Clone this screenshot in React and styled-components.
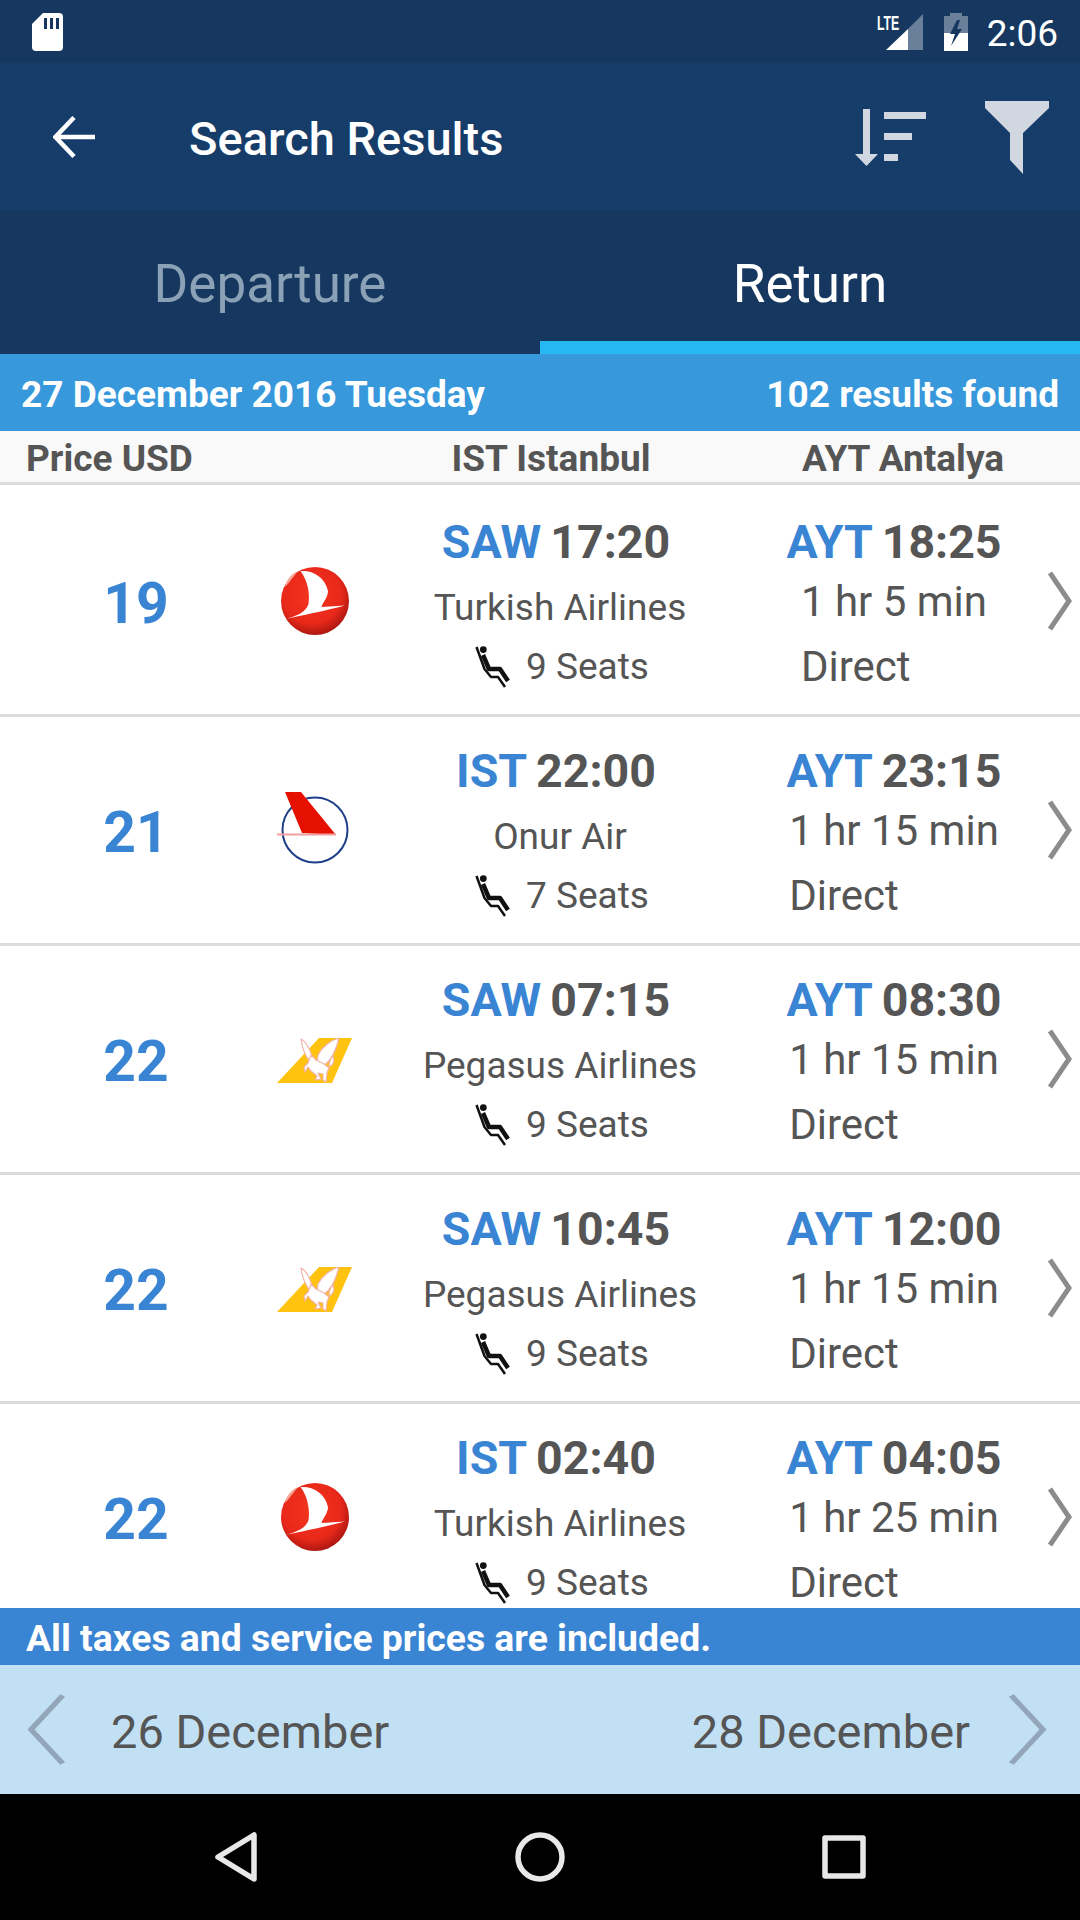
import styled, { createGlobalStyle } from 'styled-components';

const GlobalStyle = createGlobalStyle`
  html, body {
    margin: 0;
    padding: 0;
    background: #fff;
    font-family: Roboto, "Liberation Sans", sans-serif;
  }
  * { box-sizing: border-box; }
`;

const Screen = styled.div`
  width: 1080px;
  height: 1920px;
  display: flex;
  flex-direction: column;
  overflow: hidden;
`;

const StatusBar = styled.div`
  height: 63px;
  flex: none;
  background: #163860;
  display: flex;
  align-items: center;
  justify-content: space-between;
  padding: 0 22px 0 32px;
`;

const StatusRight = styled.div`
  display: flex;
  align-items: center;
`;

const Clock = styled.span`
  color: #fff;
  font-size: 37px;
  margin-left: 19px;
  padding-top: 3px;
`;

const Lte = styled.span`
  position: absolute;
  left: -9px;
  top: 2px;
  color: #fff;
  font-size: 19.5px;
  line-height: 14px;
  font-weight: 700;
  font-family: "Liberation Sans", sans-serif;
  transform: scaleX(0.63);
  transform-origin: left;
`;

const SignalWrap = styled.div`
  position: relative;
  width: 37px;
  height: 36px;
  margin-right: 21px;
  svg { display: block; }
`;

const AppBar = styled.div`
  height: 147px;
  flex: none;
  background: #163d6a;
  display: flex;
  align-items: center;
  padding: 0 31px 0 53px;
`;

const Title = styled.div`
  flex: 1;
  margin-left: 94px;
  padding-top: 4px;
  color: #fff;
  font-size: 47px;
  font-weight: 500;
`;

const ActionIcons = styled.div`
  display: flex;
  align-items: center;
  gap: 59px;
  padding-top: 2px;
`;

const Tabs = styled.div`
  height: 144px;
  flex: none;
  background: #16375f;
  display: flex;
`;

const Tab = styled.div`
  width: 540px;
  display: flex;
  align-items: center;
  justify-content: center;
  padding-top: 17px;
  font-size: 53px;
  color: ${(p) => (p.$active ? '#fff' : '#8ba1b5')};
  border-bottom: 13px solid ${(p) => (p.$active ? '#26b8f2' : 'transparent')};
`;

const DateBar = styled.div`
  height: 77px;
  flex: none;
  background: #3798dc;
  color: #fff;
  font-size: 37px;
  font-weight: 700;
  display: flex;
  align-items: center;
  justify-content: space-between;
  padding: 4px 21px 0;
`;

const ColumnHeader = styled.div`
  height: 54px;
  flex: none;
  background: #f9f9f9;
  border-bottom: 3px solid #dcdcdc;
  color: #555;
  font-size: 37px;
  font-weight: 700;
  display: grid;
  grid-template-columns: 358px 386px 318px;
  align-items: center;
  padding-top: 4px;
`;

const HeaderCell = styled.span`
  text-align: ${(p) => (p.$left ? 'left' : 'center')};
  padding-left: ${(p) => (p.$left ? '26px' : '0')};
`;

const List = styled.div`
  flex: 1;
  min-height: 0;
  overflow: hidden;
  padding-top: 3px;
`;

const Row = styled.div`
  height: 229px;
  border-bottom: 3px solid #dcdcdc;
  display: grid;
  grid-template-columns: 272px 86px 404px 264px 54px;
  align-items: start;
`;

const Price = styled.div`
  height: 226px;
  display: flex;
  align-items: center;
  justify-content: center;
  padding-top: 5px;
  color: #3a84d4;
  font-size: 57px;
  font-weight: 700;
`;

const LogoCell = styled.div`
  height: 226px;
  display: flex;
  align-items: center;
  justify-content: center;
  svg { display: block; flex: none; }
`;

const Middle = styled.div`
  display: flex;
  flex-direction: column;
  align-items: center;
  padding-top: 24px;
`;

const TimeLine = styled.div`
  height: 60px;
  display: flex;
  align-items: center;
  font-size: 46.5px;
  font-weight: 700;
  color: #555;
  transform: translateX(${(p) => p.$shift || 0}px);
`;

const Code = styled.span`
  color: #3a84d4;
  font-weight: 700;
  margin-right: 9px;
`;

const Airline = styled.div`
  height: 70px;
  display: flex;
  align-items: center;
  font-size: 37px;
  color: #555;
`;

const Seats = styled.div`
  height: 48px;
  display: flex;
  align-items: center;
  font-size: 37px;
  color: #555;
  transform: translateX(2px);
  svg { display: block; margin-right: 16px; }
`;

const Arrival = styled.div`
  display: flex;
  flex-direction: column;
  align-items: center;
  padding-top: 24px;
`;

const ArrivalInfo = styled.div`
  display: flex;
  flex-direction: column;
  align-items: flex-start;
`;

const Duration = styled.div`
  height: 58px;
  display: flex;
  align-items: center;
  font-size: 42px;
  color: #555;
`;

const Direct = styled.div`
  height: 72px;
  display: flex;
  align-items: center;
  font-size: 42px;
  color: #555;
`;

const ChevronCell = styled.div`
  height: 226px;
  display: flex;
  align-items: center;
  padding-left: 22px;
`;

const TaxBar = styled.div`
  height: 57px;
  flex: none;
  background: #3a84d4;
  color: #fff;
  font-size: 37.3px;
  font-weight: 700;
  display: flex;
  align-items: center;
  padding: 2px 0 0 26px;
`;

const DateNav = styled.div`
  height: 129px;
  flex: none;
  background: #c2e0f4;
  display: flex;
  align-items: center;
  justify-content: space-between;
  padding: 0 32px 0 26px;
  color: #555;
  font-size: 47px;
`;

const NavDate = styled.div`
  display: flex;
  align-items: center;
  gap: ${(p) => p.$gap}px;
  span { padding-top: 3px; }
`;

const NavBar = styled.div`
  height: 126px;
  flex: none;
  background: #000;
  display: flex;
  align-items: center;
  padding-left: 214px;
  svg { display: block; }
`;

const NavGap = styled.div`
  width: ${(p) => p.$w}px;
`;

const SdCard = () => (
  <svg width="31" height="38" viewBox="0 0 31 38">
    <path d="M11 0H27a4 4 0 0 1 4 4V34a4 4 0 0 1-4 4H4a4 4 0 0 1-4-4V11Z" fill="#fff" />
    <path d="M12 5h3v11h-3zM18 5h3v11h-3zM24 5h3v11h-3z" fill="#163860" />
  </svg>
);

const Signal = () => (
  <svg width="37" height="36" viewBox="0 0 37 36">
    <path d="M22 15 37 0V36H22Z" fill="#fff" fillOpacity="0.36" />
    <path d="M0 36 22 15V36Z" fill="#fff" />
  </svg>
);

const Battery = () => (
  <svg width="24" height="38" viewBox="0 0 24 38">
    <path d="M0 3H6V0H18V3H24V20H0Z" fill="#fff" fillOpacity="0.36" />
    <path d="M0 20H24V38H0Z" fill="#fff" />
    <path d="M13 7 6 21H11L7 33 18 16H13L16 7Z" fill="#163860" />
  </svg>
);

const BackArrow = () => (
  <svg width="42" height="42" viewBox="0 0 42 42" fill="none" stroke="#fff" strokeWidth="4.5">
    <path d="M42 21H3" />
    <path d="M21 1.5 2.5 21 21 40.5" />
  </svg>
);

const SortIcon = () => (
  <svg width="71" height="58" viewBox="0 0 71 58" fill="#d0d7e0">
    <path d="M8 0h7v45h8L11.5 57 0 45h8Z" />
    <path d="M29 3h42v7H29zM29 24h28v7H29zM29 45h14v7H29z" />
  </svg>
);

const FilterIcon = () => (
  <svg width="64" height="73" viewBox="0 0 64 73" fill="#d0d7e0">
    <path d="M0 0H64V7L38 32V73L25 59V32L0 7Z" />
  </svg>
);

const Chevron = ({ left, width = 24, height = 60, color = '#8c8c8c', stroke = 5 }) => (
  <svg width={width} height={height} viewBox="0 0 24 60" preserveAspectRatio="none" fill="none" stroke={color} strokeWidth={stroke}>
    <path d={left ? 'M22 2 3 30 22 58' : 'M2 2 21 30 2 58'} />
  </svg>
);

const SeatIcon = () => (
  <svg width="35" height="43" viewBox="0 0 35 43" fill="none" stroke="#111" strokeLinejoin="round">
    <circle cx="8.3" cy="4.6" r="3.4" fill="#111" stroke="none" />
    <path d="M8 10 14 24H25L33 36" strokeWidth="4.5" />
    <path d="M1.5 2 9.5 24 16 32H23L30 42" strokeWidth="2.5" />
  </svg>
);

const TurkishLogo = ({ id }) => (
  <svg width="80" height="80" viewBox="0 0 80 80">
    <defs>
      <radialGradient id={id} cx="45%" cy="40%" r="62%">
        <stop offset="0" stopColor="#f4351f" />
        <stop offset="0.7" stopColor="#e8291a" />
        <stop offset="1" stopColor="#a81510" />
      </radialGradient>
    </defs>
    <circle cx="40" cy="40" r="34" fill={`url(#${id})`} />
    <path d="M10 26C12 18 16 13 23 10 18 16 14 22 10 26Z" fill="#f7a592" />
    <path d="M25.5 10C38 9 50 16 53 30 53 36 48 41 46.5 46L70 44.5C50 50 28 54 10.5 58 22 55 31 51 33.5 43 35 33 33 20 25.5 10Z" fill="#fff" />
  </svg>
);

const OnurLogo = () => (
  <svg width="80" height="80" viewBox="0 0 80 80">
    <circle cx="40" cy="40" r="32.5" fill="none" stroke="#1f3f8a" strokeWidth="2" />
    <path d="M10 2H26L61 45 27 43Z" fill="#e51000" />
    <path d="M2 44.5H61" stroke="#f0a0a0" strokeWidth="2" fill="none" />
  </svg>
);

const PegasusLogo = () => (
  <svg width="80" height="80" viewBox="0 0 80 80">
    <path d="M2 64 44 19H77L57 64Z" fill="#ffc20e" />
    <g fill="#fff" stroke="#f2b4ac" strokeWidth="1.2" strokeLinejoin="round">
      <path d="M26 20C30 22 34 28 37 37L36 44C31 38 27 29 26 20Z" />
      <path d="M64 19C56 21 47 28 43 36L42 44 49 46C56 42 61 31 64 19Z" />
      <path d="M36 36 41 41 49 45 54 49 52 54 51 63 48 61 48 55 43 54 46 60 40 61 42 57 36 52 33 48 30 53 29 48 33 44Z" />
      <path d="M54 48C54 44 56 39 58 37 60 42 58 46 54 48Z" />
    </g>
  </svg>
);

const logos = {
  turkish: (id) => <TurkishLogo id={id} />,
  onur: () => <OnurLogo />,
  pegasus: () => <PegasusLogo />,
};

const flights = [
  { price: 19, logo: 'turkish', code: 'SAW', dep: '17:20', airline: 'Turkish Airlines', seats: 9, arr: '18:25', dur: '1 hr 5 min' },
  { price: 21, logo: 'onur', code: 'IST', dep: '22:00', airline: 'Onur Air', seats: 7, arr: '23:15', dur: '1 hr 15 min' },
  { price: 22, logo: 'pegasus', code: 'SAW', dep: '07:15', airline: 'Pegasus Airlines', seats: 9, arr: '08:30', dur: '1 hr 15 min' },
  { price: 22, logo: 'pegasus', code: 'SAW', dep: '10:45', airline: 'Pegasus Airlines', seats: 9, arr: '12:00', dur: '1 hr 15 min' },
  { price: 22, logo: 'turkish', code: 'IST', dep: '02:40', airline: 'Turkish Airlines', seats: 9, arr: '04:05', dur: '1 hr 25 min' },
];

const App = () => (
  <Screen>
    <GlobalStyle />
    <StatusBar>
      <SdCard />
      <StatusRight>
        <SignalWrap>
          <Lte>LTE</Lte>
          <Signal />
        </SignalWrap>
        <Battery />
        <Clock>2:06</Clock>
      </StatusRight>
    </StatusBar>
    <AppBar>
      <BackArrow />
      <Title>Search Results</Title>
      <ActionIcons>
        <SortIcon />
        <FilterIcon />
      </ActionIcons>
    </AppBar>
    <Tabs>
      <Tab>Departure</Tab>
      <Tab $active>Return</Tab>
    </Tabs>
    <DateBar>
      <span>27 December 2016 Tuesday</span>
      <span>102 results found</span>
    </DateBar>
    <ColumnHeader>
      <HeaderCell $left>Price USD</HeaderCell>
      <HeaderCell>IST Istanbul</HeaderCell>
      <HeaderCell>AYT Antalya</HeaderCell>
    </ColumnHeader>
    <List>
      {flights.map((f, i) => (
        <Row key={i}>
          <Price>{f.price}</Price>
          <LogoCell>{logos[f.logo](`tk${i}`)}</LogoCell>
          <Middle>
            <TimeLine $shift={-4}>
              <Code>{f.code}</Code>
              {f.dep}
            </TimeLine>
            <Airline>{f.airline}</Airline>
            <Seats>
              <SeatIcon />
              {f.seats} Seats
            </Seats>
          </Middle>
          <Arrival>
            <TimeLine>
              <Code>AYT</Code>
              {f.arr}
            </TimeLine>
            <ArrivalInfo>
              <Duration>{f.dur}</Duration>
              <Direct>Direct</Direct>
            </ArrivalInfo>
          </Arrival>
          <ChevronCell>
            <Chevron />
          </ChevronCell>
        </Row>
      ))}
    </List>
    <TaxBar>All taxes and service prices are included.</TaxBar>
    <DateNav>
      <NavDate $gap={45}>
        <Chevron left width={40} height={73} color="#93a5b8" stroke={3.5} />
        <span>26 December</span>
      </NavDate>
      <NavDate $gap={38}>
        <span>28 December</span>
        <Chevron width={40} height={73} color="#93a5b8" stroke={3.5} />
      </NavDate>
    </DateNav>
    <NavBar>
      <svg width="44" height="50" viewBox="0 0 44 50" fill="none" stroke="#e8e8e8" strokeWidth="5.5" strokeLinejoin="round">
        <path d="M40 3V47L4 25Z" />
      </svg>
      <NavGap $w={257} />
      <svg width="50" height="50" viewBox="0 0 50 50" fill="none" stroke="#e8e8e8" strokeWidth="5.5">
        <circle cx="25" cy="25" r="22" />
      </svg>
      <NavGap $w={257} />
      <svg width="44" height="44" viewBox="0 0 44 44" fill="none" stroke="#e8e8e8" strokeWidth="5.5" strokeLinejoin="round">
        <rect x="3" y="3" width="38" height="38" />
      </svg>
    </NavBar>
  </Screen>
);

export default App;
